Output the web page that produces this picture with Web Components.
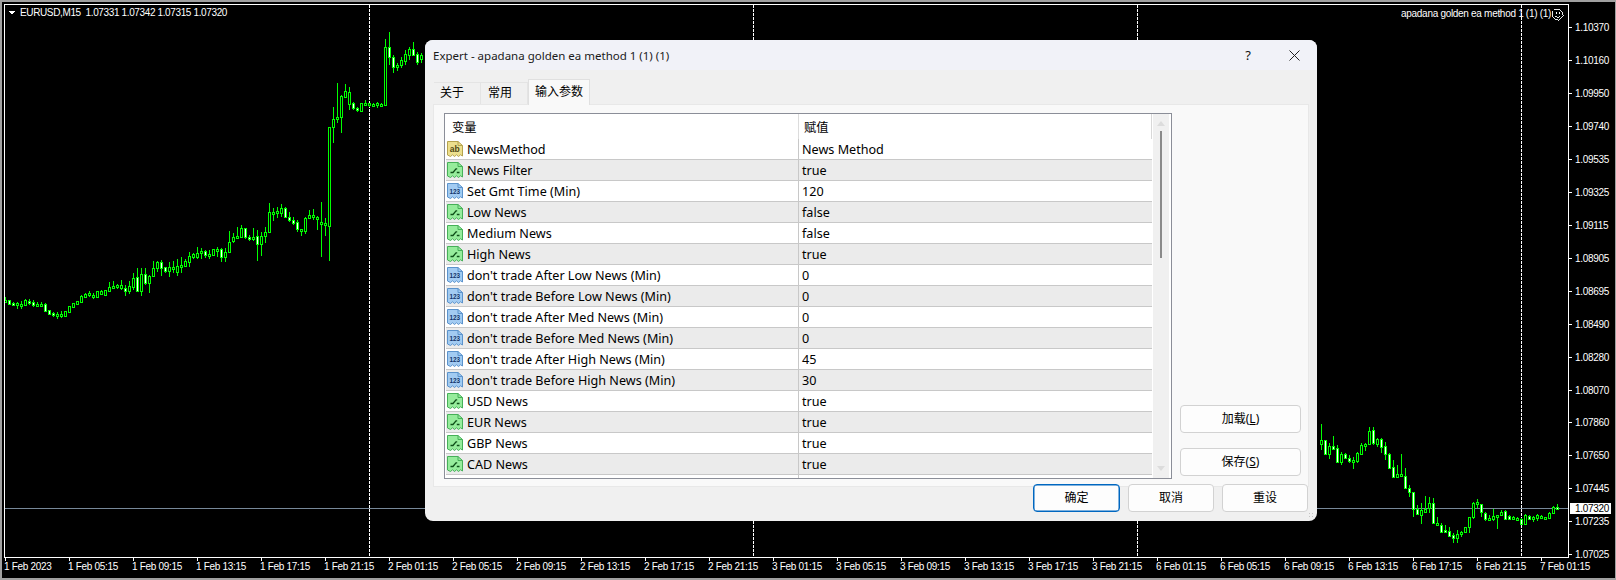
<!DOCTYPE html>
<html lang="zh"><head><meta charset="utf-8"><title>Expert</title>
<style>html,body{margin:0;padding:0;background:#000;overflow:hidden}</style></head>
<body>
<mt-desktop>
  <mt-chart slot="chart"></mt-chart>
  <mt-dialog heading="Expert - apadana golden ea method 1 (1) (1)">
    <mt-tab slot="tabs" min>关于</mt-tab>
    <mt-tab slot="tabs" min style="padding-left:7px">常用</mt-tab>
    <mt-tab slot="tabs" active>输入参数</mt-tab>
    <mt-params id="params"></mt-params>
    <mt-button slot="side" style="margin-bottom:15px">加载(<u>L</u>)</mt-button>
    <mt-button slot="side">保存(<u>S</u>)</mt-button>
    <mt-button slot="footer" primary>确定</mt-button>
    <mt-button slot="footer">取消</mt-button>
    <mt-button slot="footer">重设</mt-button>
  </mt-dialog>
</mt-desktop>
<script>
const UI='"Noto Sans","Noto Sans CJK SC",sans-serif';
function def(name,html,extra){
  customElements.define(name,class extends HTMLElement{
    constructor(){super();const r=this.attachShadow({mode:'open'});r.innerHTML=typeof html==='function'?'':html;}
    connectedCallback(){if(typeof html==='function')html(this);if(extra)extra(this);}
  });
}
def('mt-desktop',`<style>:host{display:block;position:relative;width:1616px;height:580px;overflow:hidden;background:#000}
::slotted(mt-dialog){position:absolute;left:425px;top:40px}</style><slot name="chart"></slot><slot></slot>`);

def('mt-icon',el=>{
  const k=el.getAttribute('kind');
  const c={s:['#ecdf8e','#b5a34e','#4f4715'],b:['#96ec9c','#46b058','#0e4f18'],n:['#a2cbf2','#5b93cc','#12366a']}[k];
  const inner=k==='b'?`<path d="M3.500 10.500h2.500L9 6.800h1.200M9.800 10.500H12.500" fill="none" stroke="${c[2]}" stroke-width="1.300"/>`
    :k==='s'?`<text x="7.800" y="11" font-family="Liberation Sans,sans-serif" font-size="8.500" font-weight="700" text-anchor="middle" fill="${c[2]}">ab</text>`
    :`<text x="7.800" y="10.600" font-family="Liberation Sans,sans-serif" font-size="6.400" font-weight="700" text-anchor="middle" fill="${c[2]}">123</text>`;
  el.shadowRoot.innerHTML=`<style>:host{display:block;width:16px;height:16px;flex:none}svg{display:block}</style>
  <svg width="16" height="16" viewBox="0 0 16 16"><path d="M.5.5H11L15.500 4.500V15L13.500 13.800 11.500 15.500 9.500 13.800 7.500 15.500 5.500 13.800 3.500 15.500 .5 14z" fill="${c[0]}" stroke="${c[1]}"/><path d="M11 .5V4.500H15.500" fill="none" stroke="${c[1]}"/>${inner}</svg>`;
});

def('mt-row',el=>{
  const a=i=>el.getAttribute(i);
  el.shadowRoot.innerHTML=`<style>:host{display:grid;grid-template-columns:353px 1fr;height:20px;border-bottom:1px solid #c8c8c8;font:12.6px/18px ${UI};color:#000;background:${a('alt')!==null?'#ebebeb':'#fff'}}
  .n{display:flex;align-items:center;gap:4px;padding-left:1px;white-space:nowrap;border-right:1px solid #c8c8c8}
  .n span{padding-top:2px}
  .v{padding:2px 0 0 3px;white-space:nowrap}</style>
  <div class="n"><mt-icon kind="${a('kind')}"></mt-icon><span>${a('name')}</span></div><div class="v">${a('value')}</div>`;
});

def('mt-params',el=>{
  const rows=[['s','NewsMethod','News Method'],['b','News Filter','true'],['n','Set Gmt Time (Min)','120'],['b','Low News','false'],['b','Medium News','false'],['b','High News','true'],['n',"don't trade After Low News (Min)",'0'],['n',"don't trade Before Low News (Min)",'0'],['n',"don't trade After Med News (Min)",'0'],['n',"don't trade Before Med News (Min)",'0'],['n',"don't trade After High News (Min)",'45'],['n',"don't trade Before High News (Min)",'30'],['b','USD News','true'],['b','EUR News','true'],['b','GBP News','true'],['b','CAD News','true']];
  el.shadowRoot.innerHTML=`<style>:host{display:flex;width:726px;height:364px;border:1px solid #8b8e98;background:#fff;overflow:hidden}
  .main{width:706px;margin-left:1px;display:flex;flex-direction:column}
  .head{display:grid;grid-template-columns:353px 1fr;height:25px;flex:none;box-sizing:border-box;padding-top:0;font:12.3px/23px ${UI};color:#000;border-right:1px solid #d8d8d8}
  .head div{padding-top:2px}
  .head div:first-child{padding-left:6px;border-right:1px solid #dcdcdc}.head div:last-child{padding-left:5px}
  .tail{flex:1;width:353px;box-sizing:border-box;border-right:1px solid #c8c8c8}
  .bar{width:16px;margin-left:1px;background:#f0f0f0;display:flex;flex-direction:column;align-items:center;position:relative}
  .up,.dn{width:0;height:0;border:4px solid transparent}
  .up{border-bottom:5px solid #dcdcdc;margin-top:3px}.dn{border-top:5px solid #dcdcdc;margin-top:auto;margin-bottom:3px}
  .th{width:2px;height:127px;background:#8a8a8a;margin-top:5px}</style>
  <div class="main"><div class="head"><div>变量</div><div>赋值</div></div>
  ${rows.map((r,i)=>`<mt-row kind="${r[0]}" name="${r[1]}" value="${r[2]}" ${i%2?'alt':''}></mt-row>`).join('')}
  <div class="tail"></div></div>
  <div class="bar"><div class="up"></div><div class="th"></div><div class="dn"></div></div>`;
});

def('mt-tab',`<style>:host{display:block;box-sizing:border-box;height:22px;padding:0 0 0 6px;margin-top:3px;font:12px/20px ${UI};color:#000;background:#f0f0f0;border:1px solid #e4e4e4;border-width:1px 1px 0 0;white-space:nowrap}
:host([min]){width:47px}
:host([active]){height:26px;margin-top:0;margin-bottom:-1px;padding-left:6px;padding-top:1px;background:#f9f9f9;border:1px solid #e0e0e0;border-bottom:0;position:relative;z-index:1;width:62px;line-height:22px}</style><slot></slot>`);

def('mt-button',el=>{
  el.shadowRoot.innerHTML=`<style>:host{display:flex;align-items:center;justify-content:center;box-sizing:border-box;height:28px;font:12px/1 ${UI};color:#000;background:#fdfdfd;border:1px solid #d2d2d2;border-radius:4px;width:86px}
  :host([slot=side]){width:121px}
  :host([primary]){width:87px;border-color:#0067c0;box-shadow:inset 0 0 0 .5px #0067c0}</style><slot></slot>`;
});

def('mt-dialog',el=>{
  el.shadowRoot.innerHTML=`<style>:host{display:flex;flex-direction:column;box-sizing:border-box;width:892px;height:481px;background:#f0f0f0;border-radius:8px;overflow:hidden;position:relative;font-family:${UI}}
  .title{display:flex;align-items:center;height:30px;flex:none;background:#f1f2f8;padding-left:8px;font-size:11.5px;color:#1a1a1a}
  .title span{flex:1;white-space:nowrap}
  .wb{width:46px;height:30px;display:flex;align-items:center;justify-content:center;font-size:13px;color:#111}
  .tabs{display:flex;height:34px;flex:none;padding:9px 0 0 9px;box-sizing:border-box;align-items:flex-start}
  .panel{box-sizing:border-box;width:876px;height:383px;margin-left:8px;flex:none;background:#f9f9f9;border:1px solid #e8e8e8;padding:8px 0 0 10px;display:flex;gap:8px}
  .side{display:flex;flex-direction:column;justify-content:flex-end;height:363px}
  .foot{display:flex;justify-content:flex-end;gap:8px;padding-right:9px;margin-top:-3px;position:relative}
  .grip{position:absolute;right:2px;bottom:2px;width:7px;height:7px;background:radial-gradient(circle,#c4c4c4 1px,transparent 1px) 0 0/3px 3px}
  </style>
  <div class="title"><span>${el.getAttribute('heading')}</span><div class="wb">?</div>
  <div class="wb"><svg width="11" height="11" viewBox="0 0 11 11"><path d="M.5.5l10 10M10.500.5l-10 10" stroke="#222" stroke-width="1" fill="none"/></svg></div></div>
  <div class="tabs"><slot name="tabs"></slot></div>
  <div class="panel"><slot></slot><div class="side"><slot name="side"></slot></div></div>
  <div class="foot"><slot name="footer"></slot></div><div class="grip"></div>`;
});

// candle data: [x, high, low, bodyTop, bodyBottom, filled]
const Z9=(x,h,l,t,b,f)=>[x,270+h/3,270+l/3,270+t/3,270+b/3,f];
const Z4=(x,h,l,t,b,f)=>[x,h/3,l/3,t/3,b/3,f];
const Z5=(x,h,l,t,b,f)=>[x,400+h/3,400+l/3,400+t/3,400+b/3,f];
const candles=[];
[[5,82,95,90,92,0],[9,90,102,91,101,1],[13,95,105,99,103,1],[17,96,116,100,104,0],[21,94,116,102,104,0],[25,88,107,90,105,0],[29,87,105,92,100,1],[33,90,110,96,104,1],[37,97,110,102,105,0],[41,95,110,102,105,0],[45,100,124,102,122,1],[49,120,135,121,131,1],[53,126,140,129,133,1],[57,126,146,131,135,0],[61,124,144,133,135,0],[65,122,142,124,138,0],[69,108,128,109,125,0],[73,99,114,100,110,0],[77,93,104,94,101,0],[81,76,96,78,95,0],[85,70,83,72,81,0],[89,64,80,70,76,0],[93,70,86,75,78,0],[97,62,84,64,80,0],[101,60,76,64,72,0],[105,59,78,60,76,0],[109,37,64,52,62,0],[113,33,56,47,50,0],[117,42,56,45,49,0],[121,30,59,44,54,0],[125,45,78,54,62,1],[129,34,72,47,62,0]].forEach(c=>candles.push(Z9(...c)));
[[133,820,870,835,860,0],[137,805,872,832,872,1],[141,805,888,822,872,0],[145,805,855,823,850,1],[149,825,878,828,850,0],[153,783,830,805,827,0],[157,783,815,787,805,0],[161,780,828,787,803,1],[165,800,820,802,812,1],[169,787,832,802,812,0],[173,783,820,802,806,0],[177,778,827,797,815,0],[181,770,818,795,800,0],[185,778,800,783,797,0],[189,757,800,767,785,0],[193,760,778,763,771,0],[197,742,777,760,772,0],[201,745,777,754,758,0],[205,750,775,754,764,1],[209,750,778,762,765,0],[213,748,766,748,764,0],[217,740,770,748,750,0],[221,745,785,748,770,1],[225,745,785,757,770,0],[229,693,760,725,757,0],[233,700,730,712,724,0],[237,680,710,708,712,0],[241,675,712,685,710,0],[245,683,716,685,712,1],[249,705,722,712,718,1],[253,685,722,710,718,0],[257,690,782,707,733,1],[261,695,767,707,733,0],[265,682,728,695,707,0],[269,610,700,635,695,0],[273,623,662,636,638,0],[277,620,655,634,640,0],[281,612,650,625,640,0],[285,622,650,625,650,1],[289,635,665,650,660,1],[293,650,675,660,668,1],[297,660,695,667,688,1],[301,688,707,688,692,0],[305,650,702,655,692,0],[309,630,658,646,654,0],[313,628,660,646,652,0],[317,648,690,652,655,0],[321,605,770,665,673,0],[325,655,708,670,676,0],[329,380,782,382,677,0],[333,320,430,358,380,0],[337,250,368,352,358,0],[341,285,400,288,352,0],[345,252,295,274,290,0],[349,262,330,277,312,0],[353,307,330,310,325,1],[357,320,335,324,331,1],[361,308,332,310,332,0],[365,300,313,310,312,0],[369,308,320,310,316,0],[373,310,322,311,316,0],[377,305,324,310,314,0],[381,308,318,312,314,0],[385,118,316,142,314,0],[389,97,195,142,172,1],[393,165,218,172,200,1],[397,190,212,194,200,0],[401,170,205,180,194,0],[405,150,196,163,182,0],[409,140,180,148,165,0],[413,127,168,148,165,1],[417,155,195,162,186,1],[421,160,190,165,178,0]].forEach(c=>candles.push(Z4(...c)));
[[1321,72,150,121,133,0],[1325,121,165,121,161,1],[1329,130,177,138,161,0],[1333,108,150,138,146,1],[1337,135,190,145,185,1],[1341,155,195,163,185,0],[1345,158,178,163,173,1],[1349,165,190,173,184,1],[1353,170,208,180,184,0],[1357,155,190,159,183,0],[1361,130,165,135,163,0],[1365,130,152,132,136,0],[1369,82,133,94,132,0],[1373,80,135,90,130,1],[1377,113,140,118,131,0],[1381,115,160,118,140,1],[1385,125,180,139,163,1],[1389,160,205,163,203,1],[1393,180,235,202,230,1],[1397,195,235,222,230,0],[1401,162,230,222,228,0],[1405,205,265,229,265,1],[1409,255,290,265,277,1],[1413,275,352,277,328,1],[1417,315,345,328,342,1],[1421,310,372,331,344,0],[1425,289,340,327,335,0],[1429,292,340,310,325,0],[1433,295,370,310,368,1],[1437,350,378,368,375,0],[1441,368,400,375,397,1],[1445,375,400,391,397,1],[1449,382,410,392,408,1],[1453,398,430,406,413,1],[1457,390,428,403,413,0],[1461,393,412,397,403,0],[1465,380,400,382,395,0],[1469,350,398,352,382,0],[1473,305,358,310,352,0],[1477,297,325,307,311,0],[1481,312,350,312,337,1],[1485,335,362,338,358,1],[1489,345,362,355,358,0],[1493,327,362,347,358,0],[1497,345,388,344,346,0],[1501,330,347,335,345,0],[1505,330,360,333,358,1],[1509,345,360,349,358,1],[1513,348,358,351,356,0],[1517,350,360,354,358,0],[1521,355,375,358,373,1],[1525,342,375,346,372,0],[1529,344,360,347,358,1],[1533,349,365,351,358,0],[1537,342,362,346,354,0],[1541,344,358,347,355,0],[1545,350,358,352,355,0],[1549,335,358,338,355,0],[1553,317,342,320,338,0],[1557,313,328,320,324,1]].forEach(c=>candles.push(Z5(...c)));

def('mt-chart',el=>{
  const R=Math.round;
  let s='';
  [369,753,1137,1521].forEach(x=>{for(let y=5;y<557;y+=4)s+=`<rect x="${x}" y="${y}" width="1" height="2.500" fill="#fff"/>`;});
  s+=`<rect x="5" y="508" width="1563" height="1" fill="#778899"/>`;
  candles.forEach(([x,h,l,t,b,f])=>{
    h=R(h);l=R(l);t=R(t);b=R(b);if(b<t+2)b=t+2;
    s+=`<rect x="${x}" y="${h}" width="1" height="${Math.max(l-h,1)}" fill="#0f0"/>`;
    s+=`<rect x="${x-1}" y="${t}" width="3" height="${b-t+1}" fill="#0f0"/>`;
    s+=`<rect x="${x}" y="${t+1}" width="1" height="${b-t-1}" fill="${f?'#fff':'#000'}"/>`;
  });
  s+=`<rect x="4" y="4" width="1565" height="1" fill="#fff"/><rect x="4" y="4" width="1" height="554" fill="#fff"/><rect x="4" y="557" width="1565" height="1" fill="#fff"/><rect x="1568" y="4" width="1" height="554" fill="#fff"/>`;
  s+=`<rect x="0" y="0" width="1616" height="2" fill="#a0a0a0"/><rect x="0" y="0" width="2" height="580" fill="#a0a0a0"/><rect x="0" y="578" width="1616" height="2" fill="#a0a0a0"/><rect x="1615" y="0" width="1" height="580" fill="#a0a0a0"/>`;
  const P=[['1.10370',27],['1.10160',60],['1.09950',93],['1.09740',126],['1.09535',159],['1.09325',192],['1.09115',225],['1.08905',258],['1.08695',291],['1.08490',324],['1.08280',357],['1.08070',390],['1.07860',422],['1.07650',455],['1.07445',488],['1.07235',521],['1.07025',554]];
  P.forEach(([t,y])=>{s+=`<rect x="1569" y="${y}" width="3" height="1" fill="#fff"/><text x="1575" y="${y+4}" class="a">${t}</text>`;});
  s+=`<rect x="1570" y="503" width="41" height="11" fill="#fff"/><text x="1575" y="512" class="a" style="fill:#000">1.07320</text>`;
  const T=['1 Feb 2023'];
  for(const h of ['05','09','13','17','21'])T.push(`1 Feb ${h}:15`);
  for(const d of [2,3,6])for(const h of ['01','05','09','13','17','21'])T.push(`${d} Feb ${h}:15`);
  T.push('7 Feb 01:15');
  T.forEach((t,i)=>{const x=5+64*i;s+=`<rect x="${x}" y="558" width="1" height="3" fill="#fff"/><text x="${x-1}" y="570" class="a">${t}</text>`;});
  s+=`<path d="M8 11h7l-3.500 3.500z" fill="#fff"/><text x="20" y="16" class="a" style="letter-spacing:-.37px" xml:space="preserve">EURUSD,M15  1.07331 1.07342 1.07315 1.07320</text>`;
  s+=`<text x="1551" y="17" class="a" text-anchor="end">apadana golden ea method 1 (1) (1)</text>`;
  s+=`<g fill="none" stroke="#fff" stroke-width=".9"><circle cx="1557.500" cy="14.500" r="5.500"/><path d="M1555 16c1 1.600 4 1.600 5 0"/></g><rect x="1555.500" y="12" width="1" height="1.500" fill="#fff"/><rect x="1558.500" y="12" width="1" height="1.500" fill="#fff"/>`;
  el.shadowRoot.innerHTML=`<style>:host{display:block;width:1616px;height:580px}svg{display:block}
  .a{font:10px "Liberation Sans",sans-serif;fill:#fff;letter-spacing:-.3px}</style>
  <svg width="1616" height="580" viewBox="0 0 1616 580" shape-rendering="crispEdges">${s}</svg>`;
});
</script>
</body></html>
